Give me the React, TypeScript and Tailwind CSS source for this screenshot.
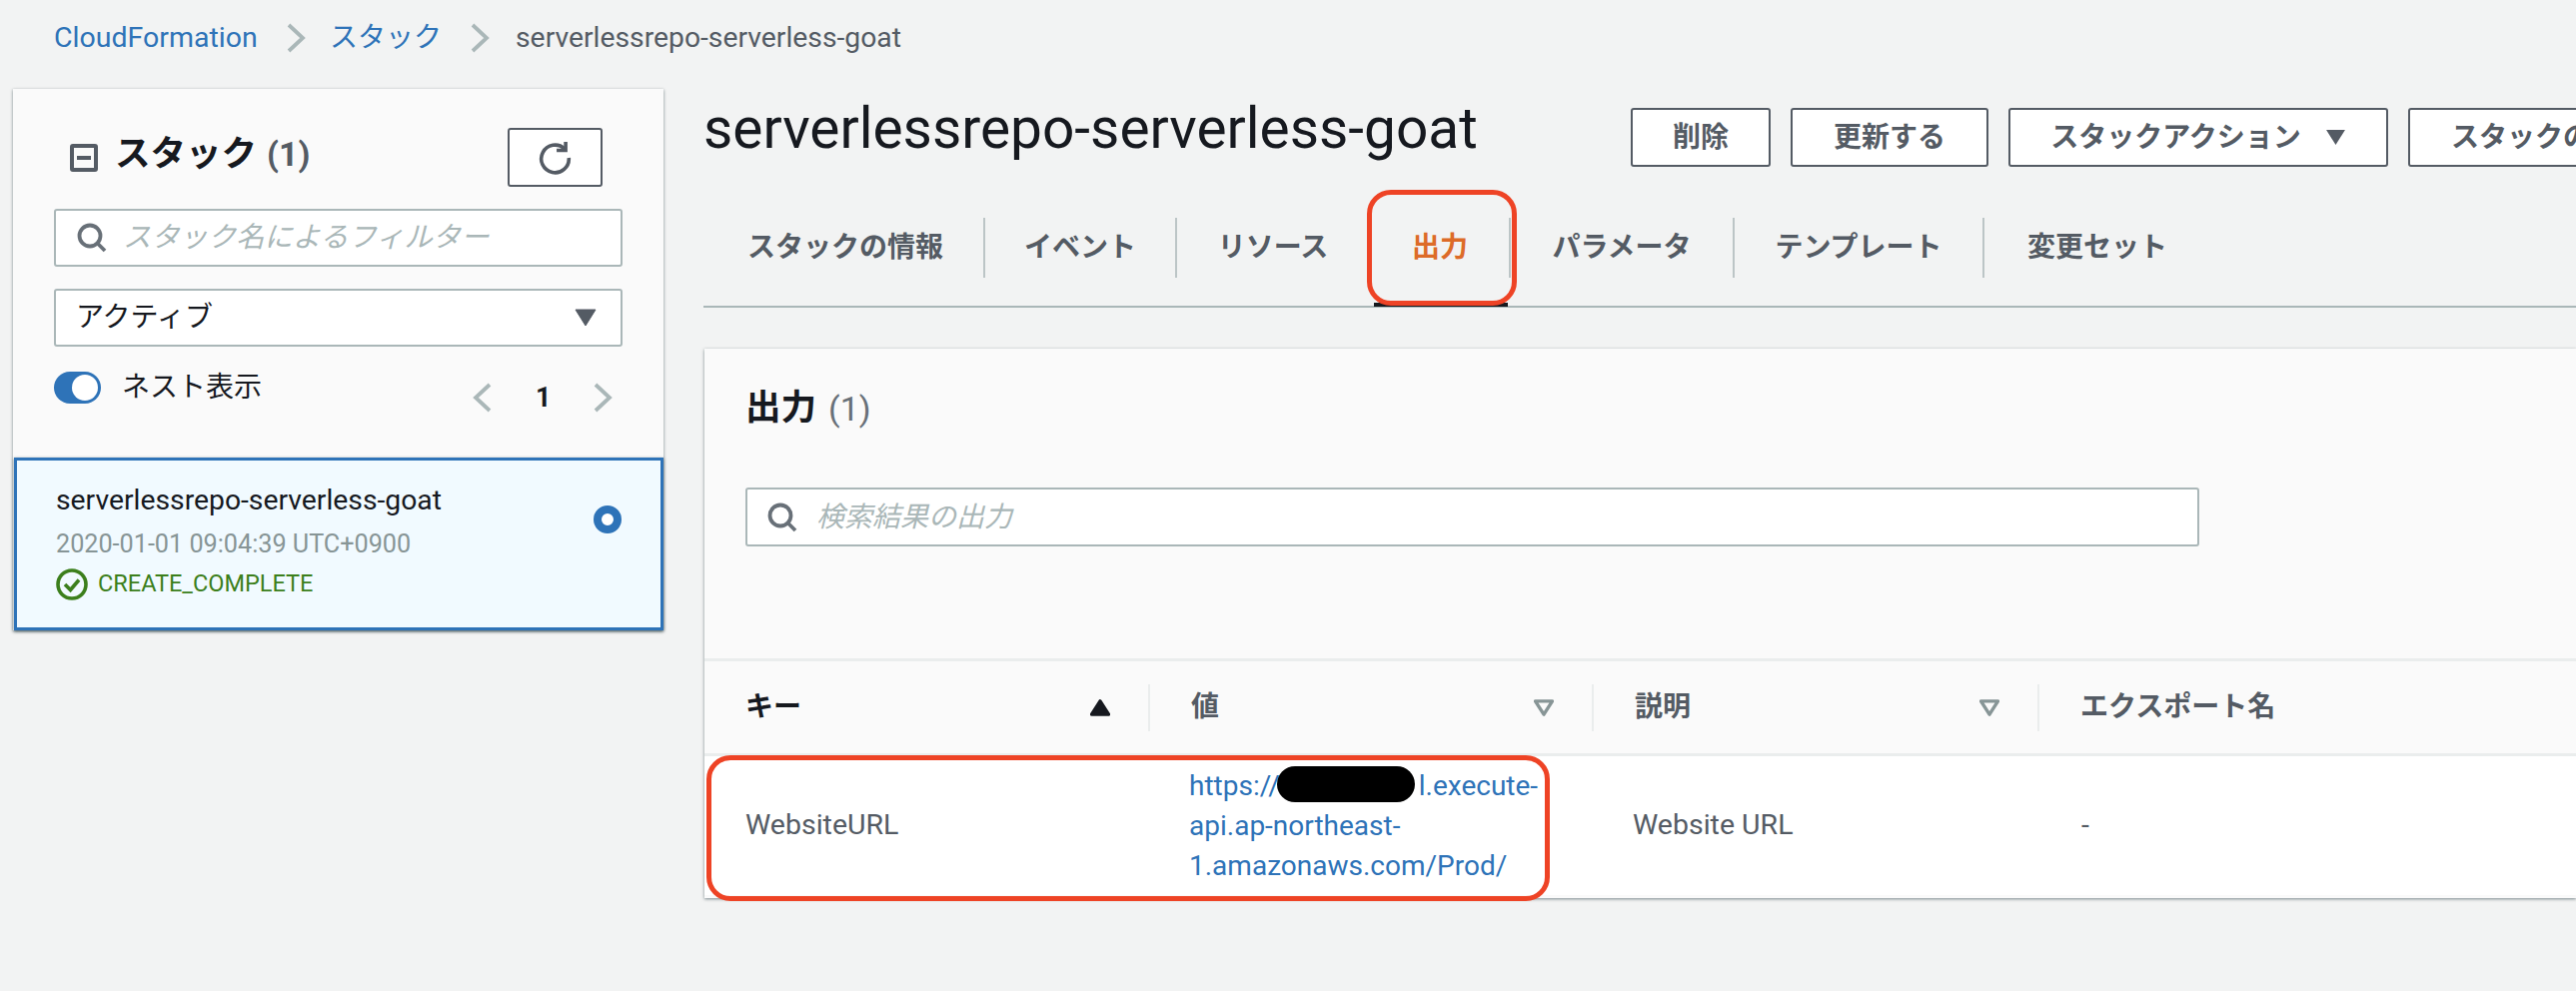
import React from "react";

const FONT = { fontFamily: '"Roboto", "Noto Sans CJK JP", sans-serif' };

function Chevron({ dir, className }: { dir: "l" | "r"; className: string }) {
  return (
    <svg viewBox="0 0 20 30" className={className} fill="none" stroke="#aab7b8" strokeWidth="3.8">
      <polyline points={dir === "r" ? "3,2 17,15 3,28" : "17,2 3,15 17,28"} />
    </svg>
  );
}

function SearchIcon() {
  return (
    <svg viewBox="0 0 30 30" className="w-[30px] h-[30px] shrink-0" fill="none" stroke="#687078" strokeWidth="3.8">
      <circle cx="13" cy="13" r="10.5" />
      <path d="M20 20 L28 28" />
    </svg>
  );
}

function Tri({ up, filled, color }: { up?: boolean; filled?: boolean; color: string }) {
  return (
    <svg viewBox="0 0 20 18" className="w-[20px] h-[17px] shrink-0">
      <polygon
        points={up ? "10,2 19,16 1,16" : "1,2 19,2 10,16"}
        fill={filled ? color : "none"}
        stroke={color}
        strokeWidth="3.6"
        strokeLinejoin="round"
      />
    </svg>
  );
}

function Btn({ children, w }: { children: React.ReactNode; w: string }) {
  return (
    <div className={`${w} h-[59px] shrink-0 flex items-center justify-center whitespace-nowrap bg-white border-2 border-[#545b64] rounded-[3px] text-[28px] font-bold text-[#545b64]`}>
      {children}
    </div>
  );
}

function Tab({ label, w, last, active }: { label: string; w: string; last?: boolean; active?: boolean }) {
  return (
    <div
      className={`relative ${w} h-[60px] flex items-center justify-center whitespace-nowrap shrink-0 text-[28px] font-bold ${last ? "" : "border-r-2 border-[#bcc5c6]"} ${active ? "text-[#dd6b28]" : "text-[#545b64]"}`}
    >
      {label}
      {active && (
        <>
          <div className="absolute left-[3px] right-[1px] top-[85px] h-[4px] bg-[#16191f]" />
          <div className="absolute left-[-4px] top-[-28px] w-[150px] h-[116px] border-[5px] border-[#ee4325] rounded-[24px]" />
        </>
      )}
    </div>
  );
}

function Th({ label, w, dark, sep, tri }: { label: string; w: string; dark?: boolean; sep?: boolean; tri?: React.ReactNode }) {
  return (
    <div className={`${w} shrink-0 h-[47px] flex items-center justify-between text-[28px] font-bold whitespace-nowrap pl-[41px] pr-[38px] ${sep ? "border-r-2 border-[#eaeded]" : ""} ${dark ? "text-[#16191f]" : "text-[#545b64]"}`}>
      <span>{label}</span>
      {tri}
    </div>
  );
}

export default function App() {
  return (
    <div className="w-[2578px] h-[992px] overflow-hidden bg-[#f2f3f3]" style={FONT}>
      <nav className="h-[76px] pl-[54px] flex items-center text-[28.5px] whitespace-nowrap">
        <span className="text-[#2e73b8] w-[204px]">CloudFormation</span>
        <Chevron dir="r" className="w-[20px] h-[30px] ml-[28px]" />
        <span className="text-[#2e73b8] text-[28px] ml-[24px]">スタック</span>
        <Chevron dir="r" className="w-[20px] h-[30px] ml-[28px]" />
        <span className="text-[#545b64] text-[28.3px] ml-[26px] w-[386px]">serverlessrepo-serverless-goat</span>
      </nav>

      <div className="flex items-start mt-[13px]">
        {/* Left panel */}
        <aside className="w-[651px] ml-[13px] shrink-0 bg-[#fafafa] shadow-[0_1px_3px_rgba(0,28,36,0.5)]">
          <div className="h-[369px] pt-[39px] px-[41px]">
            <div className="flex items-center justify-between pl-[16px] pr-[20px] h-[59px]">
              <div className="flex items-center">
                <svg viewBox="0 0 28 28" className="w-[28px] h-[28px]" fill="none" stroke="#545b64" strokeWidth="4">
                  <rect x="2" y="2" width="24" height="24" rx="1" />
                  <path d="M7 14 H21" />
                </svg>
                <div className="ml-[17px] flex items-center pb-[6px] whitespace-nowrap">
                  <span className="text-[35.5px] font-bold text-[#16191f]">スタック</span>
                  <span className="ml-[10px] text-[34px] font-bold text-[#545b64]">(1)</span>
                </div>
              </div>
              <div className="w-[95px] h-[59px] bg-white border-2 border-[#545b64] rounded-[3px] flex items-center justify-center">
                <svg viewBox="0 0 32 32" className="w-[34px] h-[34px]" fill="none" stroke="#545b64" strokeWidth="3.4">
                  <path d="M24.5 7.5 A13 13 0 1 0 28.5 16" />
                  <path d="M25.5 1 V9 H17" />
                </svg>
              </div>
            </div>
            <div className="mt-[22px] h-[58px] bg-white border-2 border-[#aab7b8] rounded-[3px] flex items-center pl-[21px]">
              <SearchIcon />
              <span className="ml-[16px] italic text-[28.3px] text-[#aab7b8] whitespace-nowrap">スタック名によるフィルター</span>
            </div>
            <div className="mt-[22px] h-[58px] bg-white border-2 border-[#aab7b8] rounded-[3px] flex items-center justify-between pl-[20px] pr-[24px]">
              <span className="text-[28px] text-[#16191f] whitespace-nowrap">アクティブ</span>
              <svg viewBox="0 0 22 18" className="w-[22px] h-[18px]">
                <polygon points="1,1 21,1 11,17" fill="#545b64" stroke="#545b64" strokeLinejoin="round" />
              </svg>
            </div>
            <div className="mt-[25px] flex items-start justify-between">
              <div className="flex items-center h-[32px]">
                <div className="w-[47px] h-[32px] rounded-full bg-[#2e73b8] flex items-center justify-end pr-[3px]">
                  <div className="w-[26px] h-[26px] rounded-full bg-white" />
                </div>
                <span className="ml-[21px] text-[28px] text-[#16191f] whitespace-nowrap">ネスト表示</span>
              </div>
              <div className="mt-[11px] pr-[10px] flex items-center h-[30px]">
                <Chevron dir="l" className="w-[20px] h-[30px]" />
                <span className="ml-[43px] w-[12px] text-[27px] font-bold text-[#16191f] text-center">1</span>
                <Chevron dir="r" className="w-[20px] h-[30px] ml-[45px]" />
              </div>
            </div>
          </div>
          <div className="relative h-[173px] ml-[1px] bg-[#f1faff] border-[3px] border-[#2e73b8] pl-[39px] pt-[20px] shadow-[0_1px_3px_rgba(0,28,36,0.5)]">
            <div className="text-[28.3px] leading-[40px] text-[#16191f] whitespace-nowrap">serverlessrepo-serverless-goat</div>
            <div className="mt-[6px] text-[25.2px] leading-[36px] text-[#879596] whitespace-nowrap">2020-01-01 09:04:39 UTC+0900</div>
            <div className="mt-[4px] flex items-center">
              <svg viewBox="0 0 32 32" className="w-[32px] h-[32px]" fill="none" stroke="#3c7f1c" strokeWidth="3.6">
                <circle cx="16" cy="16" r="14" />
                <path d="M9 16 L14.5 21.5 L23 11.5" />
              </svg>
              <span className="ml-[10px] text-[23.5px] text-[#3c7f1c] whitespace-nowrap">CREATE_COMPLETE</span>
            </div>
            <div className="absolute right-[39px] top-[45px] w-[28px] h-[28px] rounded-full border-[8px] border-[#2e73b8] bg-white" />
          </div>
        </aside>

        {/* Right column */}
        <main className="ml-[40px] w-[1874px] shrink-0 pt-[19px]">
          <div className="flex items-center h-[59px]">
            <h1 className="w-[928px] shrink-0 pb-[18px] text-[56.8px] leading-[45px] text-[#16191f] whitespace-nowrap">serverlessrepo-serverless-goat</h1>
            <div className="flex gap-[20px]">
              <Btn w="w-[140px]">削除</Btn>
              <Btn w="w-[198px]">更新する</Btn>
              <Btn w="w-[380px]">
                スタックアクション
                <svg viewBox="0 0 22 18" className="w-[21px] h-[17px] ml-[24px]">
                  <polygon points="1,1 21,1 11,17" fill="#545b64" />
                </svg>
              </Btn>
              <div className="w-[300px] h-[59px] shrink-0 pl-[41px] flex items-center whitespace-nowrap bg-white border-2 border-[#545b64] rounded-[3px] text-[28px] font-bold text-[#545b64]">
                スタックの作成
              </div>
            </div>
          </div>

          <div className="mt-[51px] h-[90px] border-b-2 border-[#aab7b8] flex items-start">
            <Tab label="スタックの情報" w="w-[282px] pl-[4px]" />
            <Tab label="イベント" w="w-[192px]" />
            <Tab label="リソース" w="w-[194px]" />
            <Tab label="出力" w="w-[140px]" active />
            <Tab label="パラメータ" w="w-[224px]" />
            <Tab label="テンプレート" w="w-[250px]" />
            <Tab label="変更セット" w="w-[226px]" last />
          </div>

          <section className="mt-[41px] ml-[1px] h-[550px] bg-[#fafafa] shadow-[0_1px_3px_rgba(0,28,36,0.5)]">
            <div className="h-[310px] pl-[41px] pt-[38px]">
              <div className="h-[44px] flex items-center whitespace-nowrap">
                <span className="text-[35.5px] font-bold text-[#16191f]">出力</span>
                <span className="ml-[12px] text-[34px] text-[#687078]">(1)</span>
              </div>
              <div className="mt-[57px] w-[1455px] h-[59px] bg-white border-2 border-[#aab7b8] rounded-[3px] flex items-center pl-[20px]">
                <SearchIcon />
                <span className="ml-[19px] italic text-[28px] text-[#aab7b8] whitespace-nowrap">検索結果の出力</span>
              </div>
            </div>
            <div className="h-[98px] border-y-[3px] border-[#eaeded] flex items-center">
              <Th label="キー" w="w-[446px]" dark sep tri={<Tri up filled color="#16191f" />} />
              <Th label="値" w="w-[444px]" sep tri={<Tri color="#879596" />} />
              <Th label="説明" w="w-[446px]" sep tri={<Tri color="#879596" />} />
              <Th label="エクスポート名" w="w-[500px]" />
            </div>
            <div className="relative h-[139px] bg-white flex items-center text-[28.5px] text-[#545b64] whitespace-nowrap">
              <div className="w-[446px] shrink-0 pl-[41px]">WebsiteURL</div>
              <div className="relative w-[444px] shrink-0 pl-[39px] text-[28px] text-[#2e73b8] leading-[40px]">
                <div>
                  https://<span className="inline-block w-[139px]" />l.execute-
                </div>
                <div>api.ap-northeast-</div>
                <div>1.amazonaws.com/Prod/</div>
                <div className="absolute left-[127px] top-[0px] w-[138px] h-[36px] bg-black rounded-[18px]" />
              </div>
              <div className="w-[446px] shrink-0 pl-[39px]">Website URL</div>
              <div className="pl-[42px]">-</div>
              <div className="absolute left-[2px] top-[-1px] w-[844px] h-[146px] border-[5px] border-[#ee4325] rounded-[24px]" />
            </div>
          </section>
        </main>
      </div>
    </div>
  );
}
